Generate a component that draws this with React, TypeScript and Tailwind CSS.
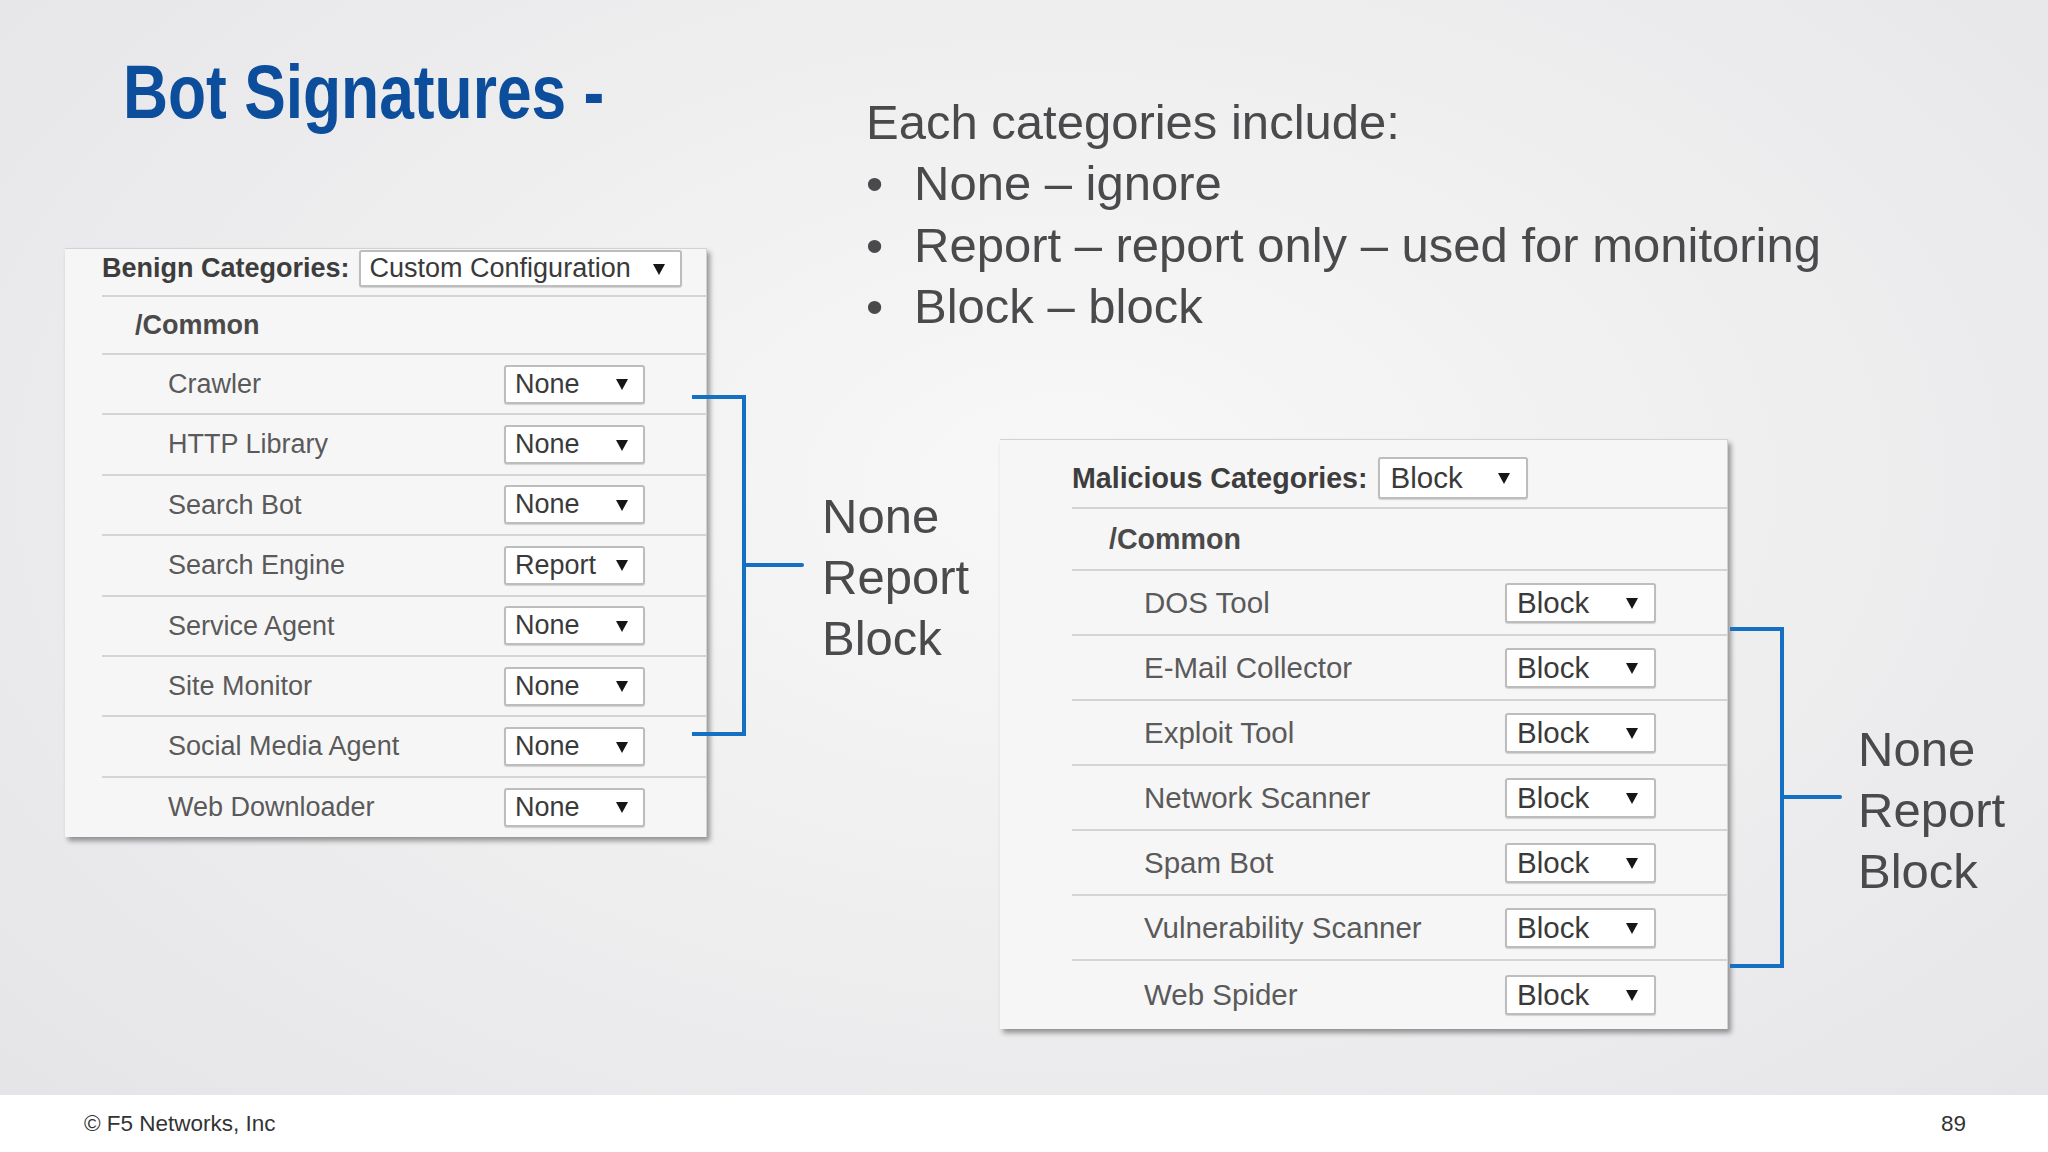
import React from "react";

const Arrow = () => (
  <svg width="12" height="12" viewBox="0 0 12 12" className="shrink-0">
    <polygon points="0,1 12,1 6,12" fill="#161616" />
  </svg>
);

type SelProps = { value: string; className: string; textClass: string };
function Sel({ value, className, textClass }: SelProps) {
  return (
    <div
      className={
        "flex shrink-0 items-center justify-between rounded-[3px] border-2 border-[#bdbdbd] bg-white shadow-[0_1px_1px_rgba(0,0,0,0.15)] " +
        className
      }
    >
      <span className={textClass}>{value}</span>
      <Arrow />
    </div>
  );
}

function Bracket() {
  return (
    <svg width="112" height="342" viewBox="0 0 112 342" className="shrink-0">
      <path d="M0 2 H52 V339 H0" fill="none" stroke="#1370c2" strokeWidth="4" />
      <path d="M52 170 H110" fill="none" stroke="#1370c2" strokeWidth="4" strokeLinecap="round" />
    </svg>
  );
}

function Options({ className }: { className: string }) {
  return (
    <div className={"shrink-0 text-[49px] leading-[61px] text-[#4a4a4c] font-['Liberation_Sans',Arial,sans-serif] " + className}>
      <div>None</div>
      <div>Report</div>
      <div>Block</div>
    </div>
  );
}

const benign: [string, string][] = [
  ["Crawler", "None"],
  ["HTTP Library", "None"],
  ["Search Bot", "None"],
  ["Search Engine", "Report"],
  ["Service Agent", "None"],
  ["Site Monitor", "None"],
  ["Social Media Agent", "None"],
  ["Web Downloader", "None"],
];

const malicious: string[] = [
  "DOS Tool",
  "E-Mail Collector",
  "Exploit Tool",
  "Network Scanner",
  "Spam Bot",
  "Vulnerability Scanner",
  "Web Spider",
];

function BenignPanel() {
  return (
    <div className="h-[589px] w-[642px] shrink-0 border-r border-t border-[#d2d2d2] bg-[#f7f6f7] shadow-[3px_4px_5px_rgba(0,0,0,0.38)] font-['Liberation_Sans',Arial,sans-serif]">
      <div className="ml-[37px]">
        <div className="flex h-[48px] items-start gap-[9px] border-b-2 border-[#d4d4d4] pt-[1px]">
          <span className="text-[27px] font-bold leading-[37px] text-[#3d3d3d]">Benign Categories:</span>
          <Sel
            value="Custom Configuration"
            className="h-[37px] w-[323px] pl-[9px] pr-[15px]"
            textClass="text-[27px] leading-none text-[#3a3a3a]"
          />
        </div>
        <div className="flex h-[58px] items-center border-b-2 border-[#d4d4d4] pl-[33px]">
          <span className="text-[27px] font-bold text-[#4a4a4a]">/Common</span>
        </div>
        {benign.map(([label, val], i) => (
          <div
            key={label}
            className={
              i < benign.length - 1
                ? "flex h-[60.4px] items-center border-b-2 border-[#d4d4d4] pl-[66px]"
                : "flex h-[59px] items-center pl-[66px]"
            }
          >
            <span className="w-[336px] shrink-0 text-[27px] text-[#5a5a5a]">{label}</span>
            <Sel value={val} className="h-[39px] w-[141px] pl-[9px] pr-[15px]" textClass="text-[27px] leading-none text-[#3a3a3a]" />
          </div>
        ))}
      </div>
    </div>
  );
}

function MaliciousPanel() {
  return (
    <div className="h-[590px] w-[728px] shrink-0 border-r border-t border-[#d2d2d2] bg-[#f7f6f7] shadow-[3px_4px_5px_rgba(0,0,0,0.38)] font-['Liberation_Sans',Arial,sans-serif]">
      <div className="ml-[72px]">
        <div className="flex h-[69px] items-start gap-[10px] border-b-2 border-[#d4d4d4] pt-[17px]">
          <span className="text-[28.6px] font-bold leading-[42px] text-[#3d3d3d]">Malicious Categories:</span>
          <Sel value="Block" className="h-[42px] w-[150px] pl-[11px] pr-[16px]" textClass="text-[29.5px] leading-none text-[#3a3a3a]" />
        </div>
        <div className="flex h-[62px] items-center border-b-2 border-[#d4d4d4] pl-[37px]">
          <span className="text-[28.6px] font-bold text-[#4a4a4a]">/Common</span>
        </div>
        {malicious.map((label, i) => (
          <div
            key={label}
            className={
              i < malicious.length - 1
                ? "flex h-[65px] items-center border-b-2 border-[#d4d4d4] pl-[72px]"
                : "flex h-[67px] items-center pl-[72px]"
            }
          >
            <span className="w-[361px] shrink-0 text-[29.5px] text-[#5a5a5a]">{label}</span>
            <Sel value="Block" className="h-[40px] w-[151px] pl-[10px] pr-[16px]" textClass="text-[29.5px] leading-none text-[#3a3a3a]" />
          </div>
        ))}
      </div>
    </div>
  );
}

export default function App() {
  return (
    <div className="flex h-[1152px] w-[2048px] flex-col overflow-hidden bg-[radial-gradient(ellipse_at_52%_42%,#f8f8f9_0%,#efeff0_45%,#e4e4e7_100%)]">
      <div className="grid h-[1095px] shrink-0 grid-cols-[866px_1fr]">
        {/* left column */}
        <div className="flex flex-col pl-[65px]">
          <h1 className="ml-[58px] mt-[54px] origin-left scale-x-[0.82] whitespace-nowrap text-[76px] font-bold leading-none text-[#0c4d9c] font-['Liberation_Sans',Arial,sans-serif]">
            Bot Signatures -
          </h1>
          <div className="mt-[118px] flex items-start">
            <BenignPanel />
            <div className="-ml-[15px] mt-[147px]">
              <Bracket />
            </div>
            <Options className="ml-[18px] mt-[238px]" />
          </div>
        </div>
        {/* right column */}
        <div className="flex flex-col">
          <div className="mt-[92px] text-[49px] leading-[61.3px] text-[#4a4a4c] font-['Liberation_Sans',Arial,sans-serif]">
            <div>Each categories include:</div>
            <div className="flex">
              <span className="w-[48px] shrink-0">•</span>
              <span>None – ignore</span>
            </div>
            <div className="flex">
              <span className="w-[48px] shrink-0">•</span>
              <span>Report – report only – used for monitoring</span>
            </div>
            <div className="flex">
              <span className="w-[48px] shrink-0">•</span>
              <span>Block – block</span>
            </div>
          </div>
          <div className="ml-[134px] mt-[102px] flex items-start">
            <MaliciousPanel />
            <div className="ml-[2px] mt-[188px]">
              <Bracket />
            </div>
            <Options className="ml-[16px] mt-[280px]" />
          </div>
        </div>
      </div>
      <footer className="flex h-[57px] shrink-0 items-center justify-between bg-white pl-[84px] pr-[82px] text-[22.5px] text-[#333333] font-['Liberation_Sans',Arial,sans-serif]">
        <span>© F5 Networks, Inc</span>
        <span>89</span>
      </footer>
    </div>
  );
}
